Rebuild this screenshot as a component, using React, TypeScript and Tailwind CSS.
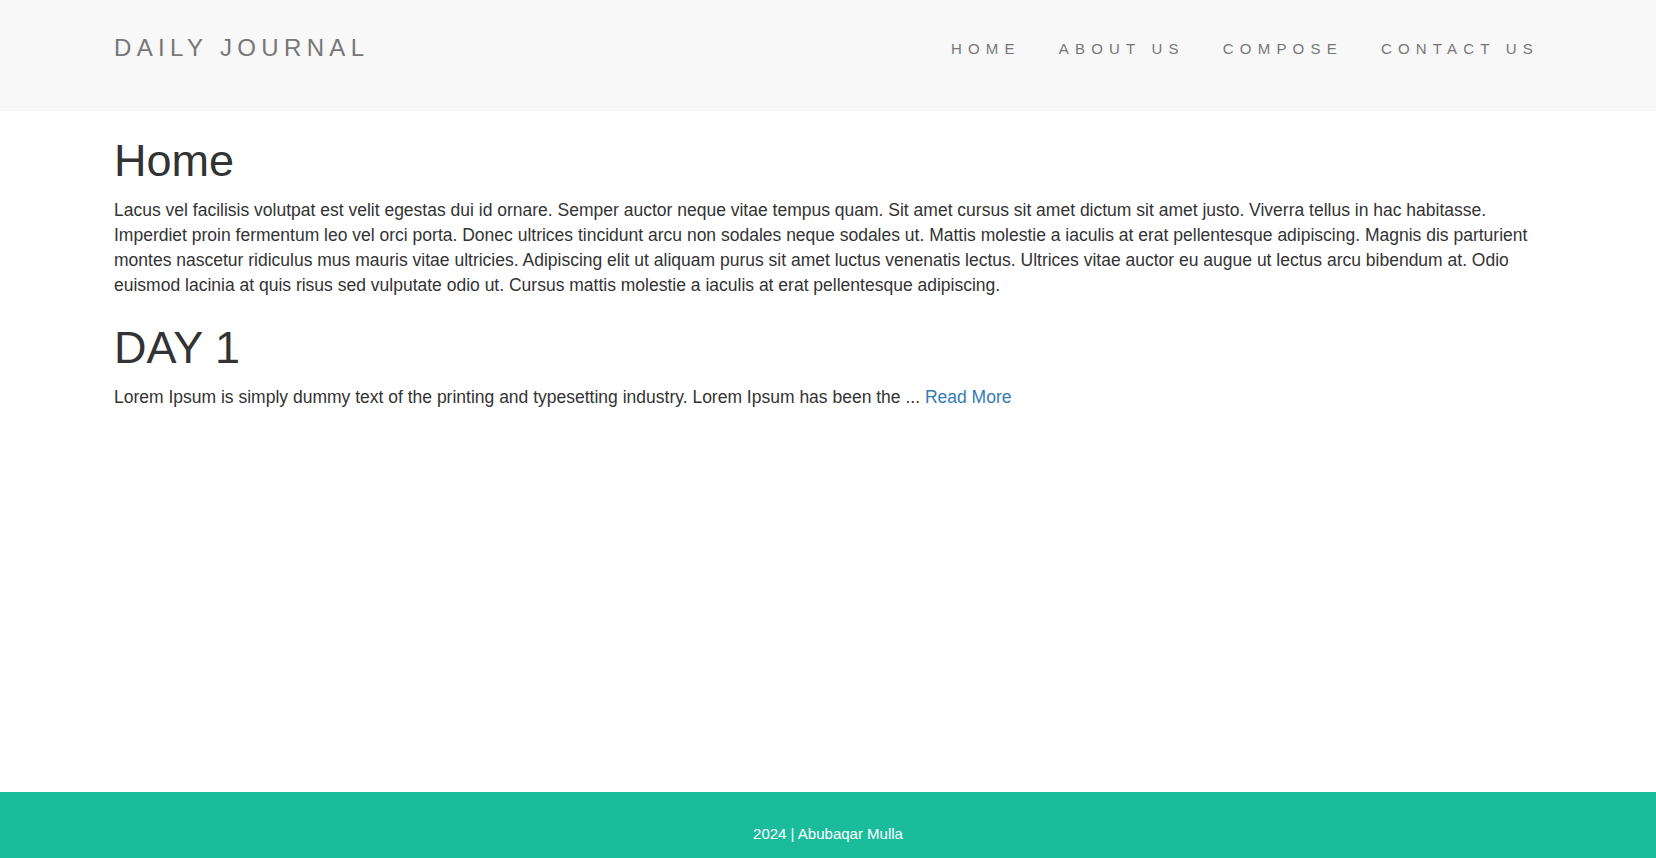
import React from "react";

const navItems = ["HOME", "ABOUT US", "COMPOSE", "CONTACT US"];

const homeText =
  "Lacus vel facilisis volutpat est velit egestas dui id ornare. Semper auctor neque vitae tempus quam. Sit amet cursus sit amet dictum sit amet justo. Viverra tellus in hac habitasse. Imperdiet proin fermentum leo vel orci porta. Donec ultrices tincidunt arcu non sodales neque sodales ut. Mattis molestie a iaculis at erat pellentesque adipiscing. Magnis dis parturient montes nascetur ridiculus mus mauris vitae ultricies. Adipiscing elit ut aliquam purus sit amet luctus venenatis lectus. Ultrices vitae auctor eu augue ut lectus arcu bibendum at. Odio euismod lacinia at quis risus sed vulputate odio ut. Cursus mattis molestie a iaculis at erat pellentesque adipiscing.";

const posts = [
  {
    title: "DAY 1",
    body: "Lorem Ipsum is simply dummy text of the printing and typesetting industry. Lorem Ipsum has been the ...",
  },
];

function Header() {
  return (
    <nav className="h-[111px] bg-[#f8f8f8]">
      <div className="flex items-start justify-between px-[114px] pt-[36px]">
        <a href="#" className="text-[24px] leading-[24px] tracking-[5.35px] text-[#777777]">
          DAILY JOURNAL
        </a>
        <ul className="mt-[5px] mr-[3px] flex gap-[38px]">
          {navItems.map((item) => (
            <li key={item}>
              <a href="#" className="block text-[15px] leading-[15px] tracking-[6.2px] text-[#777777]">
                {item}
              </a>
            </li>
          ))}
        </ul>
      </div>
    </nav>
  );
}

export default function App() {
  return (
    <div className="flex min-h-screen flex-col bg-white font-['Liberation_Sans',Arial,sans-serif] text-[#333333]">
      <Header />

      <main className="flex-1 px-[114px]">
        <h1 className="mt-[25px] mb-[12.5px] text-[45px] leading-[1.1] font-normal">Home</h1>
        <p className="mb-[12.5px] text-[17.5px] leading-[25px]">{homeText}</p>

        {posts.map((post) => (
          <div key={post.title}>
            <h1 className="mt-[25px] mb-[12.5px] text-[45px] leading-[1.1] font-normal">{post.title}</h1>
            <p className="mb-[12.5px] text-[17.5px] leading-[25px]">
              {post.body}{" "}
              <a href="#" className="text-[#337ab7]">
                Read More
              </a>
            </p>
          </div>
        ))}
      </main>

      <footer className="h-[66px] bg-[#1abc9c] pt-[31px] text-center text-[15px] leading-[21px] text-white">
        <p>2024 | Abubaqar Mulla</p>
      </footer>
    </div>
  );
}
